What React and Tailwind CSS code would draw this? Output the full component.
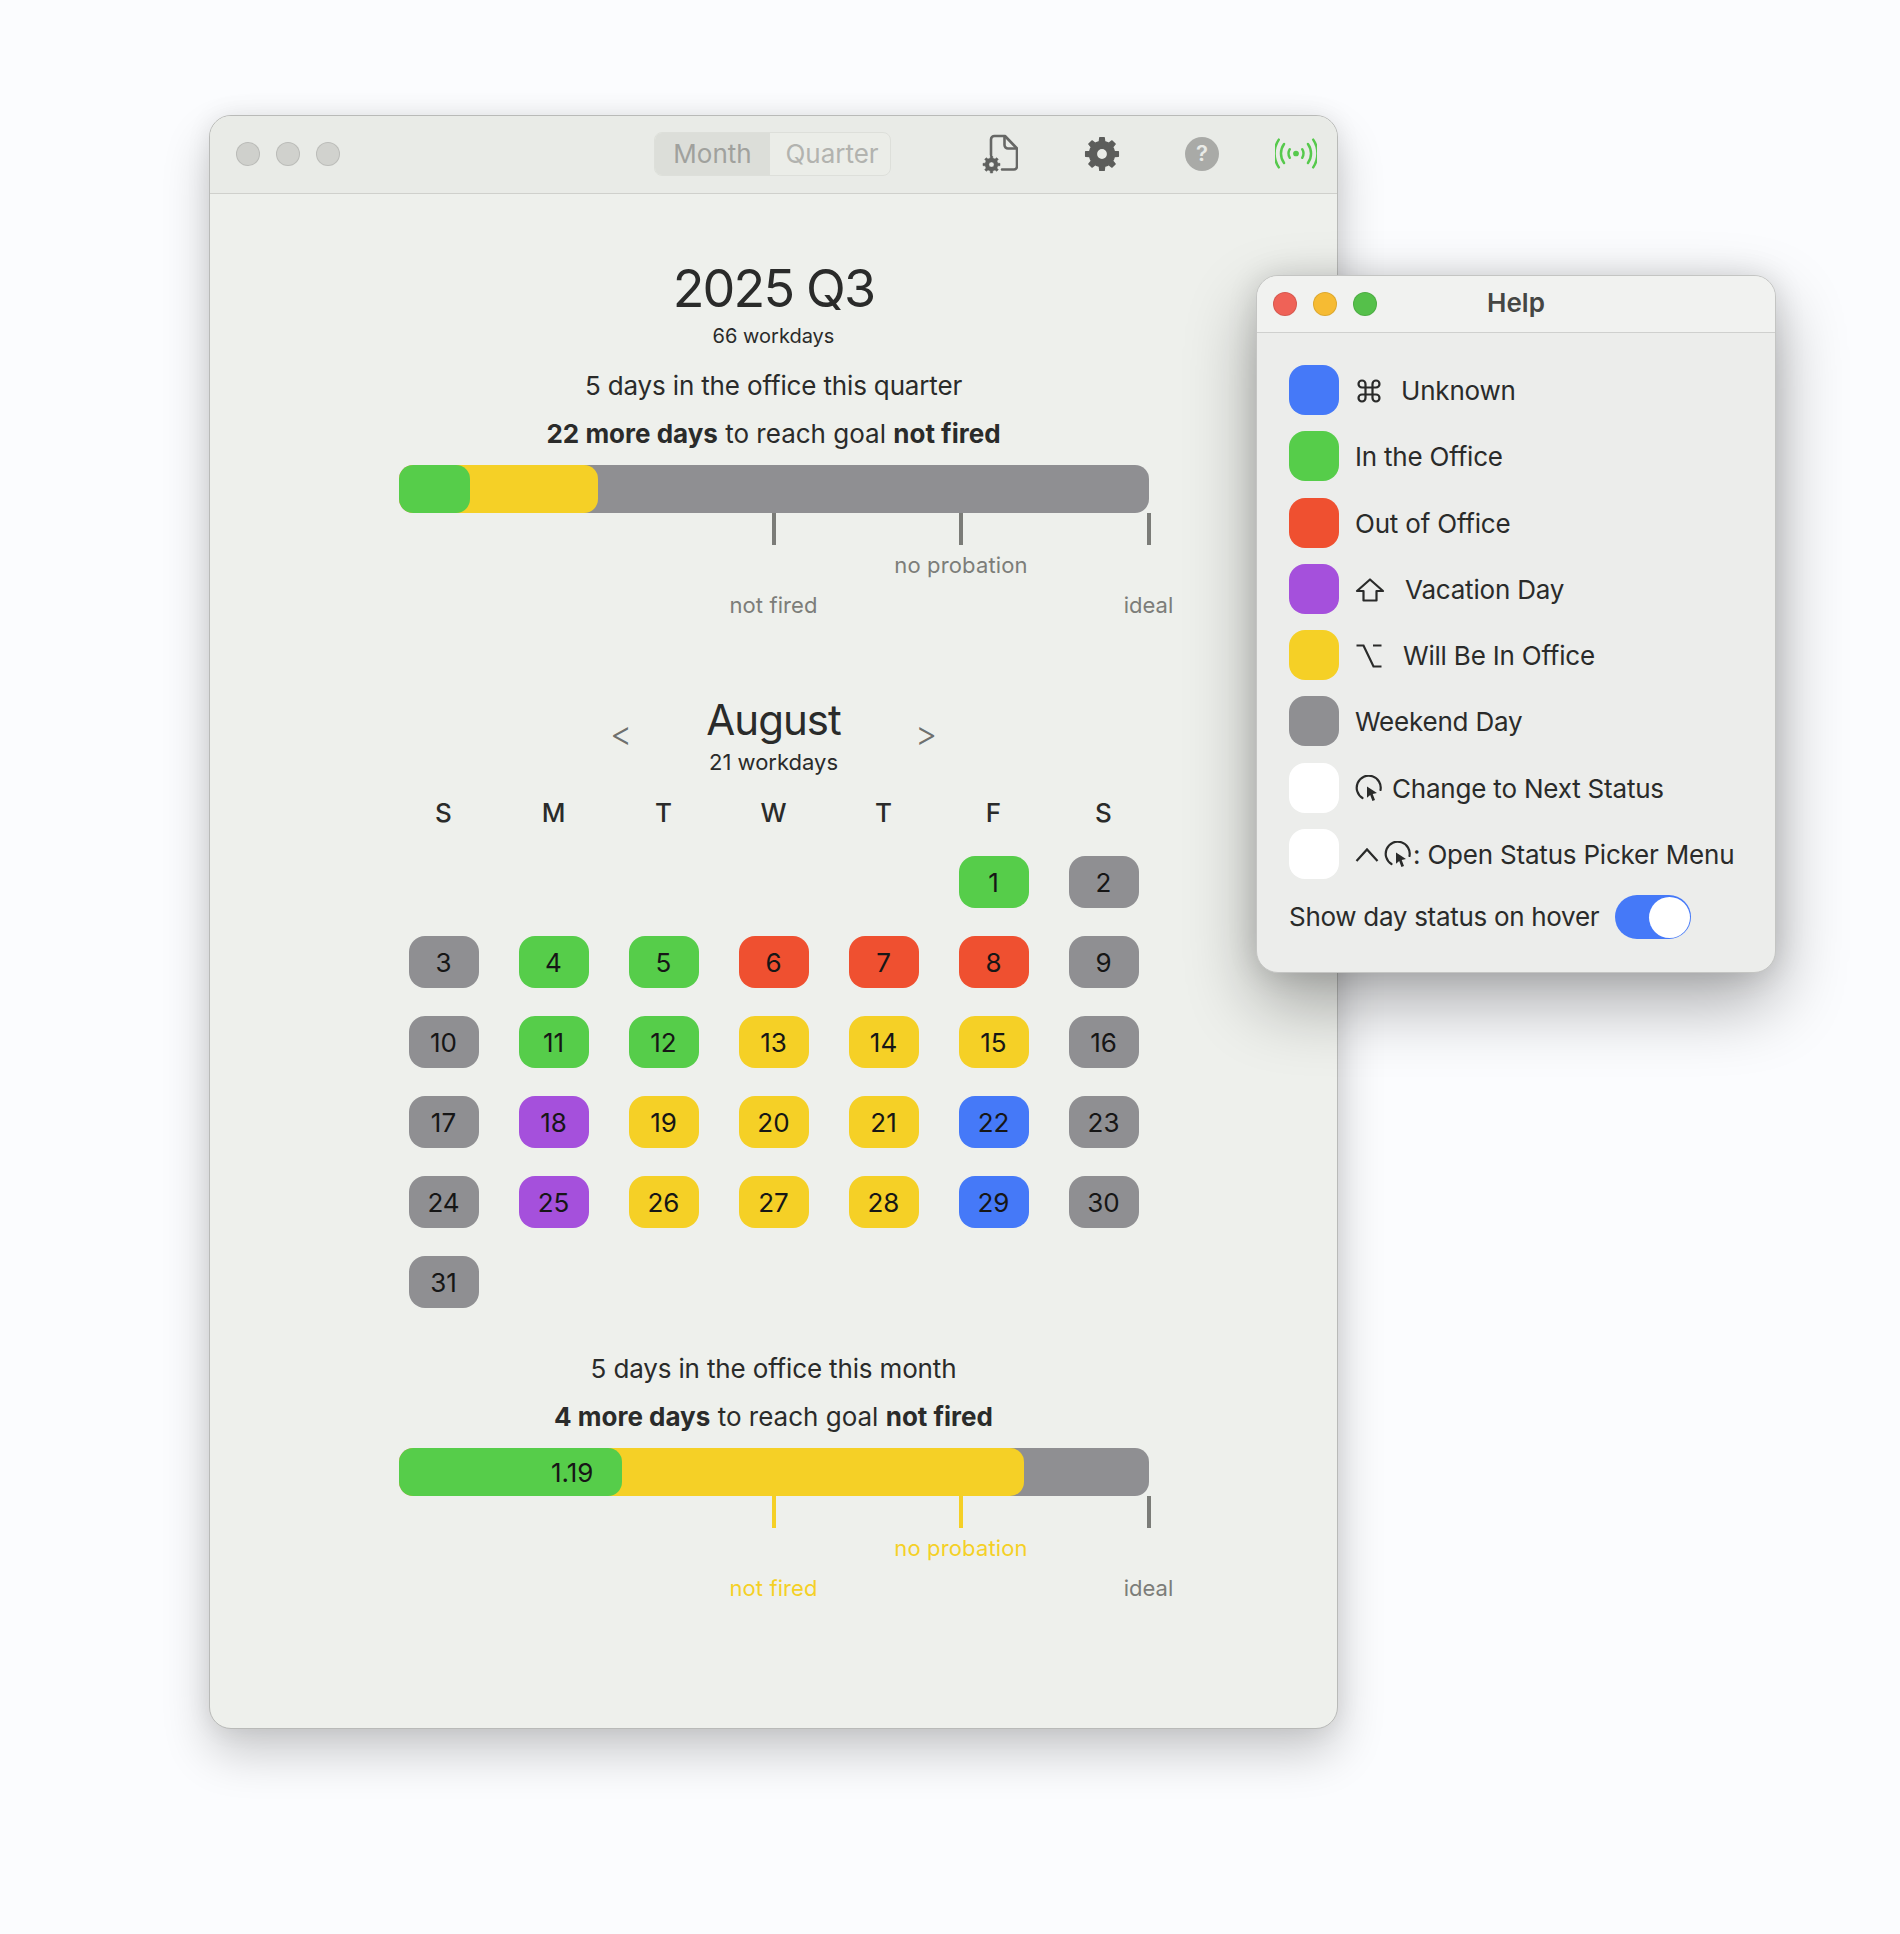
import React from "react";
import { Command } from "lucide-react";

const COLORS = {
  g: "bg-[#56cd4a]",
  r: "bg-[#ef5030]",
  y: "bg-[#f5d026]",
  w: "bg-[#8f8f92]",
  p: "bg-[#a550dc]",
  b: "bg-[#4579f8]",
};

const WEEKS = [
  [null, null, null, null, null, [1, "g"], [2, "w"]],
  [[3, "w"], [4, "g"], [5, "g"], [6, "r"], [7, "r"], [8, "r"], [9, "w"]],
  [[10, "w"], [11, "g"], [12, "g"], [13, "y"], [14, "y"], [15, "y"], [16, "w"]],
  [[17, "w"], [18, "p"], [19, "y"], [20, "y"], [21, "y"], [22, "b"], [23, "w"]],
  [[24, "w"], [25, "p"], [26, "y"], [27, "y"], [28, "y"], [29, "b"], [30, "w"]],
  [[31, "w"], null, null, null, null, null, null],
];

function gearPath(cx, cy, rOuter, rInner, rHole, teeth = 8) {
  const pts = [];
  const step = (Math.PI * 2) / teeth;
  for (let i = 0; i < teeth; i++) {
    const a = i * step - Math.PI / 2;
    const at = (r, d) => `${(cx + r * Math.cos(a + d)).toFixed(2)} ${(cy + r * Math.sin(a + d)).toFixed(2)}`;
    pts.push(at(rInner, -step * 0.5), at(rInner, -step * 0.27), at(rOuter, -step * 0.17), at(rOuter, step * 0.17), at(rInner, step * 0.27));
  }
  const hole = `M${cx - rHole} ${cy}a${rHole} ${rHole} 0 1 0 ${rHole * 2} 0a${rHole} ${rHole} 0 1 0 ${-rHole * 2} 0z`;
  return `M${pts.join("L")}Z${hole}`;
}

function DocGear() {
  return (
    <svg width="36" height="40" viewBox="0 0 36 40" fill="none">
      <path d="M9 21V5.5A3.5 3.5 0 0 1 12.5 2H23l12 12.5V32.5a3 3 0 0 1-3 3H20" stroke="#666765" strokeWidth="2.6" strokeLinejoin="round" strokeLinecap="round" />
      <path d="M22.5 2.5V11a3.5 3.5 0 0 0 3.5 3.5h8.5" stroke="#666765" strokeWidth="2.6" strokeLinejoin="round" />
      <path d={gearPath(9.5, 30.5, 8.6, 6.4, 2.6)} fill="#5f605e" fillRule="evenodd" stroke="#5f605e" strokeWidth="0.5" strokeLinejoin="round" />
    </svg>
  );
}

function Gear() {
  return (
    <svg width="36" height="36" viewBox="0 0 36 36">
      <path d={gearPath(18, 18, 16.5, 12.6, 5.6)} fill="#5c5d5b" fillRule="evenodd" stroke="#5c5d5b" strokeWidth="1.4" strokeLinejoin="round" />
    </svg>
  );
}

function Antenna() {
  const s = { stroke: "#56c94c", strokeWidth: 2.6, strokeLinecap: "round", fill: "none" };
  return (
    <svg width="42" height="31" viewBox="0 0 44 32">
      <circle cx="22" cy="16" r="3" fill="#56c94c" />
      <path d="M15.5 11.5a8.5 8.5 0 0 0 0 9" {...s} />
      <path d="M28.5 11.5a8.5 8.5 0 0 1 0 9" {...s} />
      <path d="M9.5 6a17 17 0 0 0 0 20" {...s} />
      <path d="M34.5 6a17 17 0 0 1 0 20" {...s} />
      <path d="M4 1.5a26 26 0 0 0 0 29" {...s} />
      <path d="M40 1.5a26 26 0 0 1 0 29" {...s} />
    </svg>
  );
}

function CursorCircle() {
  return (
    <svg width="28" height="28" viewBox="0 0 28 28" fill="none" className="shrink-0">
      <path d="M7.5 23A12 12 0 1 1 25.5 15" stroke="#2a2b2a" strokeWidth="2.2" strokeLinecap="round" />
      <path d="M12 11.5l10 6.5-4.3.9 2.3 6-2.6 1-2.2-6-3.2 2.8z" fill="#2a2b2a" />
    </svg>
  );
}

function ShiftGlyph() {
  return (
    <svg width="30" height="26" viewBox="0 0 30 26" fill="none">
      <path d="M15 2.5L28 14h-6.5v9.5h-13V14H2z" stroke="#2a2b2a" strokeWidth="2.2" strokeLinejoin="round" />
    </svg>
  );
}

function OptionGlyph() {
  return (
    <svg width="28" height="26" viewBox="0 0 28 26" fill="none">
      <path d="M1.5 2.5h7l10 21h8M18 2.5h8.5" stroke="#2a2b2a" strokeWidth="2.2" />
    </svg>
  );
}

function CaretGlyph() {
  return (
    <svg width="24" height="16" viewBox="0 0 24 16" fill="none">
      <path d="M1.5 14L12 2.5 22.5 14" stroke="#2a2b2a" strokeWidth="2.2" />
    </svg>
  );
}

function Lights({ colors }) {
  return (
    <div className="flex gap-4">
      {colors.map((c) => (
        <span key={c} className={`${c} size-6 rounded-full border border-black/10`} />
      ))}
    </div>
  );
}

function Scale({ tone1, tone2, bar }) {
  return (
    <div className="relative h-[155px] w-[750px] shrink-0">
      <div className="absolute inset-x-0 top-0 h-12 overflow-hidden rounded-[14px] bg-[#8f8f92]">{bar}</div>
      <span className={`absolute left-1/2 top-12 h-8 w-1 -translate-x-1/2 ${tone1.bg}`} />
      <span className={`absolute left-3/4 top-12 h-8 w-1 -translate-x-1/2 ${tone2.bg}`} />
      <span className="absolute right-0 top-12 h-8 w-1 translate-x-0.5 bg-[#7b7c78]" />
      <span className={`absolute left-3/4 top-[86px] -translate-x-1/2 text-[22px] leading-7 tracking-[0.15px] whitespace-nowrap ${tone2.text}`}>no probation</span>
      <span className={`absolute left-1/2 top-[126px] -translate-x-1/2 text-[22px] leading-7 tracking-[0.1px] whitespace-nowrap ${tone1.text}`}>not fired</span>
      <span className="absolute left-full top-[126px] -translate-x-1/2 text-[22px] leading-7 text-[#7c7d79]">ideal</span>
    </div>
  );
}

const GRAY_TONE = { bg: "bg-[#7b7c78]", text: "text-[#7c7d79]" };
const YELLOW_TONE = { bg: "bg-[#f5d026]", text: "text-[#f5d026]" };

function Segment({ className, children, width }) {
  return <div className={`flex h-full items-center justify-center ${width} ${className}`}>{children}</div>;
}

function HelpRow({ color, children }) {
  return (
    <div className="flex h-[50px] items-center">
      <span className={`size-[50px] shrink-0 rounded-[16px] ${color}`} />
      <div className="ml-4 flex translate-y-px items-center text-[26px] leading-8 tracking-[-0.2px] whitespace-nowrap">{children}</div>
    </div>
  );
}

export default function App() {
  return (
    <div className="relative h-[1934px] w-[1900px] overflow-hidden bg-[#fbfcfe] font-['Inter',sans-serif] text-[#2a2b2a]">
      {/* Main window */}
      <div className="absolute left-[209px] top-[115px] flex h-[1614px] w-[1129px] flex-col overflow-hidden rounded-[22px] border border-[#b9bab8] bg-[#eef0ec] shadow-[0_24px_48px_rgba(0,0,0,0.2),0_0_24px_rgba(0,0,0,0.08)]">
        <div className="flex h-[78px] shrink-0 items-center border-b border-[#cfd0cc] bg-[#e9ebe7] pb-0.5">
          <div className="ml-[26px] flex w-[418px] shrink-0">
            <Lights colors={["bg-[#cfd0cc]", "bg-[#d0d1cd]", "bg-[#d1d2ce]"]} />
          </div>
          <div className="flex h-11 w-[237px] shrink-0 overflow-hidden rounded-lg border border-[#dddfda] bg-[#ebede8] text-[26px]">
            <Segment width="w-[116px]" className="bg-[#dcded9] text-[#a0a19d]">Month</Segment>
            <Segment width="w-[121px]" className="pl-1 text-[#b2b3af]">Quarter</Segment>
          </div>
          <div className="ml-[91px] flex items-center">
            <DocGear />
            <div className="ml-[66px]"><Gear /></div>
            <div className="ml-[65px] flex size-[34px] items-center justify-center rounded-full bg-[#a9aaa7] text-[22px] font-semibold text-[#e9ebe7]">?</div>
            <div className="ml-[56px]"><Antenna /></div>
          </div>
        </div>

        <div className="flex flex-col items-center">
          <h1 className="mt-[65px] h-[60px] text-[52px] font-normal leading-[60px] tracking-[-1.8px] text-[#2a2b2a]">2025 Q3</h1>
          <div className="mt-[3px] h-7 text-[20px] leading-7">66 workdays</div>
          <div className="mt-5 h-8 text-[26px] leading-8 tracking-[-0.15px]">5 days in the office this quarter</div>
          <div className="mt-4 h-8 text-[26px] leading-8"><b className="font-bold">22 more days</b> to reach goal <b className="font-bold">not fired</b></div>
          <div className="mt-[15px]">
            <Scale
              tone1={GRAY_TONE}
              tone2={GRAY_TONE}
              bar={
                <div className="relative h-full w-[199px] rounded-[14px] bg-[#f5d026]">
                  <div className="h-full w-[71px] rounded-[14px] bg-[#56cd4a]" />
                </div>
              }
            />
          </div>

          <div className="mt-[72px] flex w-[770px] items-center justify-center">
            <span className="w-10 text-center text-[34px] font-light leading-10 text-[#6f706e]">&lt;</span>
            <div className="mx-10 flex w-[185px] flex-col items-center pt-0.5">
              <div className="h-[52px] text-[42px] leading-[52px] tracking-[-1px]">August</div>
              <div className="mt-[3px] h-[26px] text-[22px] leading-[26px]">21 workdays</div>
            </div>
            <span className="w-10 text-center text-[34px] font-light leading-10 text-[#6f706e]">&gt;</span>
          </div>

          <div className="mt-[22px] grid w-[770px] grid-cols-7 text-center text-[26px] font-medium leading-8">
            {["S", "M", "T", "W", "T", "F", "S"].map((d, i) => (
              <div key={i}>{d}</div>
            ))}
          </div>

          <div className="mt-[27px] grid w-[770px] grid-cols-7 gap-y-7">
            {WEEKS.flat().map((c, i) => (
              <div key={i} className="flex h-[52px] justify-center">
                {c && (
                  <div className={`flex w-[70px] items-center justify-center rounded-[16px] text-[26px] text-[#161616] ${COLORS[c[1]]}`}>
                    {c[0]}
                  </div>
                )}
              </div>
            ))}
          </div>

          <div className="mt-[45px] h-8 text-[26px] leading-8 tracking-[-0.15px]">5 days in the office this month</div>
          <div className="mt-4 h-8 text-[26px] leading-8"><b className="font-bold">4 more days</b> to reach goal <b className="font-bold">not fired</b></div>
          <div className="mt-[15px]">
            <Scale
              tone1={YELLOW_TONE}
              tone2={YELLOW_TONE}
              bar={
                <div className="h-full w-[625px] rounded-[14px] bg-[#f5d026]">
                  <div className="flex h-full w-[223px] items-center justify-end rounded-[14px] bg-[#56cd4a] pr-7 text-[26px] text-[#161616]">1.19</div>
                </div>
              }
            />
          </div>
        </div>
      </div>

      {/* Help window */}
      <div className="absolute left-[1256px] top-[275px] flex h-[698px] w-[520px] flex-col overflow-hidden rounded-[22px] border border-[#c4c5c3] bg-[#ecedeb] shadow-[0_30px_70px_rgba(0,0,0,0.33),0_0_30px_rgba(0,0,0,0.12)]">
        <div className="relative flex h-[57px] shrink-0 items-center justify-center border-b border-[#cfd0ce] bg-[#f1f2f0] pb-1">
          <div className="absolute left-4 top-4">
            <Lights colors={["bg-[#ef6257]", "bg-[#f6bb33]", "bg-[#55c04a]"]} />
          </div>
          <span className="text-[26px] font-semibold text-[#454644]">Help</span>
        </div>
        <div className="flex flex-col gap-[16.3px] pl-8 pt-8">
          <HelpRow color="bg-[#4579f8]">
            <span className="flex w-[46px] shrink-0"><Command size={28} strokeWidth={1.9} color="#2a2b2a" /></span>Unknown
          </HelpRow>
          <HelpRow color="bg-[#56cd4a]">In the Office</HelpRow>
          <HelpRow color="bg-[#ef5030]">Out of Office</HelpRow>
          <HelpRow color="bg-[#a550dc]">
            <span className="flex w-[50px] shrink-0"><ShiftGlyph /></span>Vacation Day
          </HelpRow>
          <HelpRow color="bg-[#f5d026]">
            <span className="flex w-[48px] shrink-0"><OptionGlyph /></span>Will Be In Office
          </HelpRow>
          <HelpRow color="bg-[#8f8f92]">Weekend Day</HelpRow>
          <HelpRow color="bg-white">
            <span className="flex w-[37px] shrink-0"><CursorCircle /></span>Change to Next Status
          </HelpRow>
          <HelpRow color="bg-white">
            <span className="flex w-[29px] shrink-0"><CaretGlyph /></span>
            <span className="flex w-[29px] shrink-0"><CursorCircle /></span>: Open Status Picker Menu
          </HelpRow>
        </div>
        <div className="mt-4 flex items-center pl-8">
          <span className="text-[26px] leading-8 tracking-[-0.3px] whitespace-nowrap">Show day status on hover</span>
          <span className="ml-4 flex h-11 w-[76px] items-center justify-end rounded-full bg-[#4579f8] pr-px">
            <span className="size-[41px] rounded-full bg-white" />
          </span>
        </div>
      </div>
    </div>
  );
}
